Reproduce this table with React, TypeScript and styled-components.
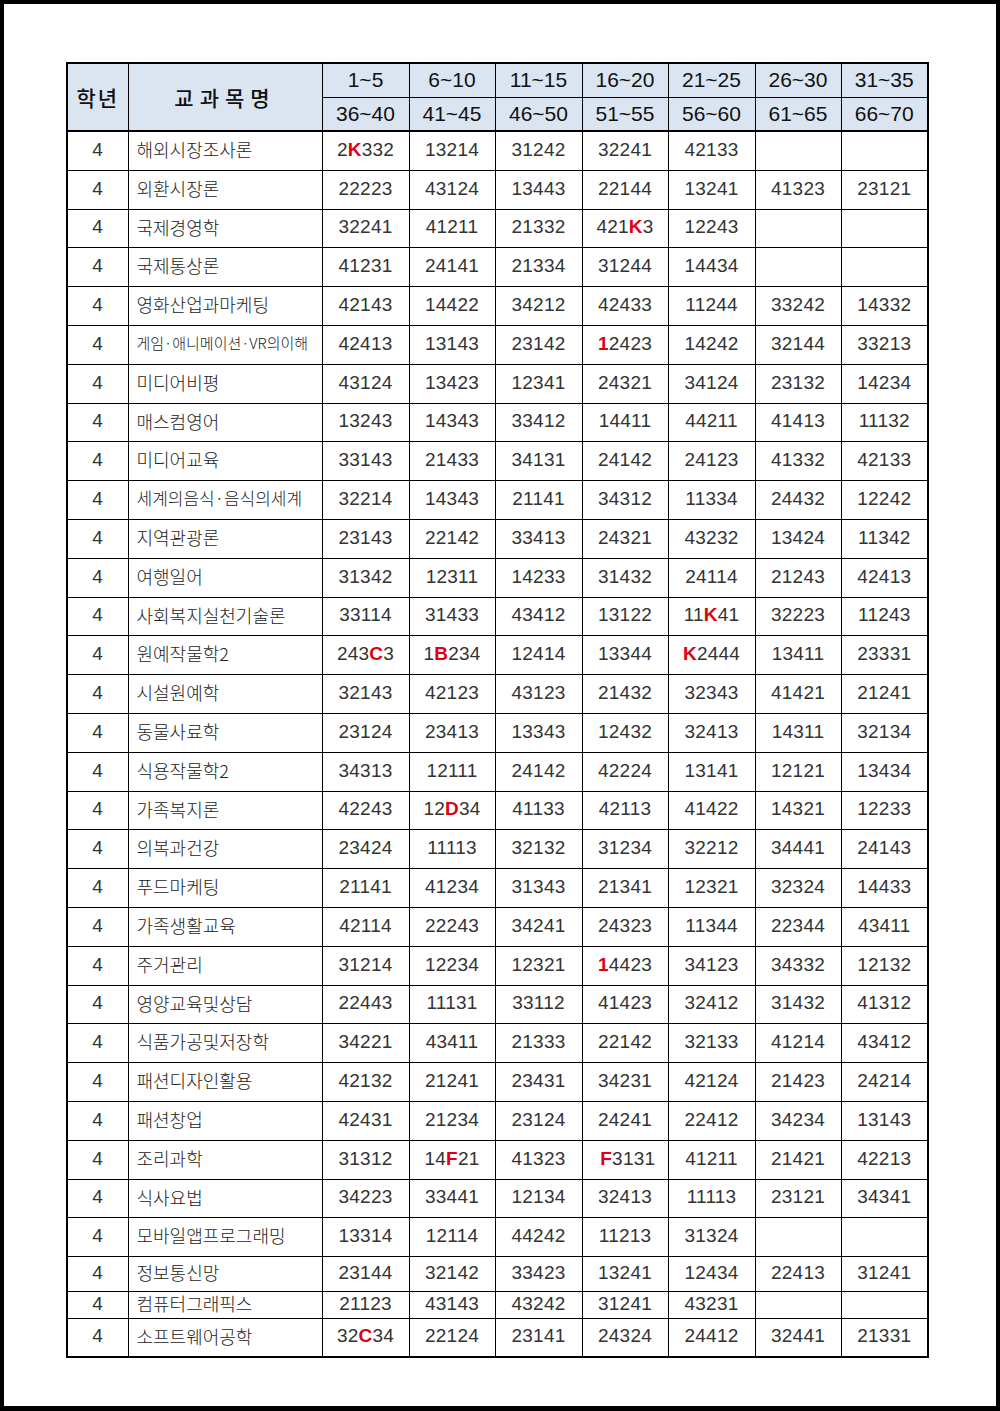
import styled, { createGlobalStyle } from "styled-components";

type Row = {
  name: string;
  size?: number;
  height: number;
  codes: string[];
};

const NAMES: [string, string[], number?][] = [
  ["해외시장조사론", ["2[K]332", "13214", "31242", "32241", "42133", "", ""]],
  ["외환시장론", ["22223", "43124", "13443", "22144", "13241", "41323", "23121"]],
  ["국제경영학", ["32241", "41211", "21332", "421[K]3", "12243", "", ""]],
  ["국제통상론", ["41231", "24141", "21334", "31244", "14434", "", ""]],
  ["영화산업과마케팅", ["42143", "14422", "34212", "42433", "11244", "33242", "14332"]],
  ["게임·애니메이션·VR의이해", ["42413", "13143", "23142", "[1]2423", "14242", "32144", "33213"], 15],
  ["미디어비평", ["43124", "13423", "12341", "24321", "34124", "23132", "14234"]],
  ["매스컴영어", ["13243", "14343", "33412", "14411", "44211", "41413", "11132"]],
  ["미디어교육", ["33143", "21433", "34131", "24142", "24123", "41332", "42133"]],
  ["세계의음식·음식의세계", ["32214", "14343", "21141", "34312", "11334", "24432", "12242"], 17],
  ["지역관광론", ["23143", "22142", "33413", "24321", "43232", "13424", "11342"]],
  ["여행일어", ["31342", "12311", "14233", "31432", "24114", "21243", "42413"]],
  ["사회복지실천기술론", ["33114", "31433", "43412", "13122", "11[K]41", "32223", "11243"]],
  ["원예작물학2", ["243[C]3", "1[B]234", "12414", "13344", "[K]2444", "13411", "23331"]],
  ["시설원예학", ["32143", "42123", "43123", "21432", "32343", "41421", "21241"]],
  ["동물사료학", ["23124", "23413", "13343", "12432", "32413", "14311", "32134"]],
  ["식용작물학2", ["34313", "12111", "24142", "42224", "13141", "12121", "13434"]],
  ["가족복지론", ["42243", "12[D]34", "41133", "42113", "41422", "14321", "12233"]],
  ["의복과건강", ["23424", "11113", "32132", "31234", "32212", "34441", "24143"]],
  ["푸드마케팅", ["21141", "41234", "31343", "21341", "12321", "32324", "14433"]],
  ["가족생활교육", ["42114", "22243", "34241", "24323", "11344", "22344", "43411"]],
  ["주거관리", ["31214", "12234", "12321", "[1]4423", "34123", "34332", "12132"]],
  ["영양교육및상담", ["22443", "11131", "33112", "41423", "32412", "31432", "41312"]],
  ["식품가공및저장학", ["34221", "43411", "21333", "22142", "32133", "41214", "43412"]],
  ["패션디자인활용", ["42132", "21241", "23431", "34231", "42124", "21423", "24214"]],
  ["패션창업", ["42431", "21234", "23124", "24241", "22412", "34234", "13143"]],
  ["조리과학", ["31312", "14[F]21", "41323", " [F]3131", "41211", "21421", "42213"]],
  ["식사요법", ["34223", "33441", "12134", "32413", "11113", "23121", "34341"]],
  ["모바일앱프로그래밍", ["13314", "12114", "44242", "11213", "31324", "", ""]],
  ["정보통신망", ["23144", "32142", "33423", "13241", "12434", "22413", "31241"]],
  ["컴퓨터그래픽스", ["21123", "43143", "43242", "31241", "43231", "", ""]],
  ["소프트웨어공학", ["32[C]34", "22124", "23141", "24324", "24412", "32441", "21331"]],
];

// 29 evenly spread rows, then three odd ones at the bottom
const ROWS: Row[] = NAMES.map(([name, codes, size], i) => {
  let height = Math.round((i + 1) * 38.8) - Math.round(i * 38.8);
  if (i === 29) height = 35;
  if (i === 30) height = 27;
  if (i === 31) height = 39;
  return { name, codes, size, height };
});

const TOP = ["1~5", "6~10", "11~15", "16~20", "21~25", "26~30", "31~35"];
const BOTTOM = ["36~40", "41~45", "46~50", "51~55", "56~60", "61~65", "66~70"];
const COLS = [61, 194, 87, 86, 87, 86, 87, 86, 87];

function Code({ value }: { value: string }) {
  const parts = value.split(/(\[[A-Z0-9]\])/).filter(Boolean);
  return (
    <>
      {parts.map((p, i) =>
        p.startsWith("[") ? <Mark key={i}>{p.slice(1, -1)}</Mark> : <span key={i}>{p}</span>
      )}
    </>
  );
}

export default function App() {
  return (
    <>
      <GlobalStyle />
      <Page>
        <Table>
          <colgroup>
            {COLS.map((w, i) => (
              <col key={i} style={{ width: w }} />
            ))}
          </colgroup>
          <thead>
            <HeadRow>
              <HeadCell rowSpan={2}>
                <HeadLabel>학년</HeadLabel>
              </HeadCell>
              <HeadCell rowSpan={2}>
                <HeadLabel $spaced>교과목명</HeadLabel>
              </HeadCell>
              {TOP.map((t) => (
                <HeadCell key={t}>{t}</HeadCell>
              ))}
            </HeadRow>
            <HeadRow>
              {BOTTOM.map((t) => (
                <HeadCell key={t} $last>
                  {t}
                </HeadCell>
              ))}
            </HeadRow>
          </thead>
          <tbody>
            {ROWS.map((row, i) => (
              <BodyRow key={i} $h={row.height}>
                <Cell>4</Cell>
                <NameCell $size={row.size ?? 18}>{row.name}</NameCell>
                {row.codes.map((c, j) => (
                  <Cell key={j}>
                    <Code value={c} />
                  </Cell>
                ))}
              </BodyRow>
            ))}
          </tbody>
        </Table>
      </Page>
    </>
  );
}

const GlobalStyle = createGlobalStyle`
  html, body {
    margin: 0;
    padding: 0;
    background: #fff;
  }
`;

const Page = styled.div`
  box-sizing: border-box;
  width: 1000px;
  height: 1411px;
  border: 4px solid #000;
  border-bottom-width: 5px;
  padding: 58px 0 0 62px;
  background: #fff;
`;

const Table = styled.table`
  border-collapse: collapse;
  table-layout: fixed;
  width: 861px;
  border: 2px solid #000;
  font-family: "Liberation Sans", Arial, "Noto Sans CJK KR", sans-serif;
  color: #000;
`;

const HeadRow = styled.tr`
  height: 34px;
`;

const HeadCell = styled.th<{ $last?: boolean }>`
  background: #dbe5f1;
  border: 1px solid #000;
  border-bottom-width: ${({ $last }) => ($last ? "2px" : "1px")};
  padding: 0;
  font-size: 21px;
  font-weight: normal;
  text-align: center;
  vertical-align: middle;
  color: #111;
  &[rowspan] {
    border-bottom-width: 2px;
  }
`;

const HeadLabel = styled.span<{ $spaced?: boolean }>`
  font-family: "Noto Sans CJK KR", sans-serif;
  font-size: 21px;
  font-weight: 500;
  letter-spacing: ${({ $spaced }) => ($spaced ? "6px" : "2px")};
`;

const BodyRow = styled.tr<{ $h: number }>`
  height: ${({ $h }) => $h}px;
`;

const Cell = styled.td`
  border: 1px solid #000;
  padding: 0 0 2px;
  font-size: 19px;
  line-height: 20px;
  letter-spacing: 0.2px;
  text-align: center;
  vertical-align: middle;
  white-space: pre;
  color: #333;
`;

const NameCell = styled.td<{ $size: number }>`
  border: 1px solid #000;
  padding: 0 0 3px 8px;
  font-family: "Noto Sans CJK KR", sans-serif;
  font-size: ${({ $size }) => $size}px;
  line-height: 22px;
  font-weight: 300;
  text-align: left;
  vertical-align: middle;
  white-space: nowrap;
  overflow: hidden;
  color: #222;
`;

const Mark = styled.span`
  color: #e00010;
  font-weight: bold;
`;
